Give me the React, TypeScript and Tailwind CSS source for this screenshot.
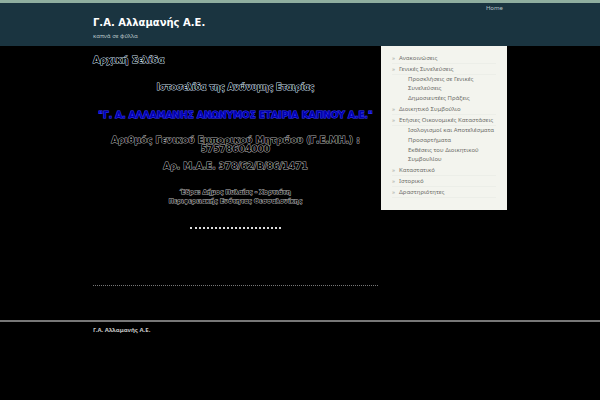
const sections = [
  { label: 'Ανακοινώσεις', items: [] },
  {
    label: 'Γενικές Συνελεύσεις',
    items: ['Προσκλήσεις σε Γενικές Συνελεύσεις', 'Δημοσιευτέες Πράξεις'],
  },
  { label: 'Διοικητικό Συμβούλιο', items: [] },
  {
    label: 'Ετήσιες Οικονομικές Καταστάσεις',
    items: ['Ισολογισμοί και Αποτελέσματα', 'Προσαρτήματα', 'Εκθέσεις του Διοικητικού Συμβουλίου'],
  },
  { label: 'Καταστατικό', items: [] },
  { label: 'Ιστορικό', items: [] },
  { label: 'Δραστηριότητες', items: [] },
];

// black letters, only their edges are lit
const outlined = '[paint-order:stroke] text-black';

const Header = () => (
  <header className="h-[46px] border-t-[3px] border-[#8fae9f] bg-[#1a3440]">
    <div className="mx-auto flex w-[69%] items-start justify-between">
      <div className="pt-3">
        <h1 className="font-['DejaVu_Sans',sans-serif] text-[10px] leading-4 font-bold text-white">Γ.Α. Αλλαμανής Α.Ε.</h1>
        <p className="text-[6px] leading-[10px] text-[#b5c2c6]">καπνά σε φύλλα</p>
      </div>
      <nav className="pr-1">
        <a href="#" className="block text-[6px] leading-[10px] text-[#b5c2c6]">Home</a>
      </nav>
    </div>
  </header>
);

const Sidebar = () => (
  <aside className="w-[126px] shrink-0 bg-[#f3f4ee] px-[11px] pt-[7px] pb-3 text-[6px] text-[#6f6f6b]">
    <ul>
      {sections.map((s) => (
        <li key={s.label}>
          <div className="flex border-b border-[#eceee8] leading-[10px]">
            <span className="w-[7px] shrink-0 text-[#a5a5a0]">»</span>
            <a href="#" className="whitespace-nowrap">{s.label}</a>
          </div>
          <ul className="pl-4 leading-[9px]">
            {s.items.map((item) => (
              <li key={item} className="pb-px"><a href="#">{item}</a></li>
            ))}
          </ul>
        </li>
      ))}
    </ul>
  </aside>
);

const Content = () => (
  <main className="min-w-0 flex-1 pt-2">
    <h2 className={`${outlined} text-[9px] leading-3 font-bold font-['DejaVu_Sans',sans-serif] [-webkit-text-stroke:1px_#c4dbe6]`}>Αρχική Σελίδα</h2>
    <div className="flex flex-col items-center pt-4 text-center font-bold">
      <h3 className={`${outlined} text-[8px] leading-3 font-['DejaVu_Sans',sans-serif] [-webkit-text-stroke:1px_#c4dbe6]`}>
        Ιστοσελίδα της Ανώνυμης Εταιρίας
      </h3>
      <h3 className="pt-4 font-['DejaVu_Sans',sans-serif] text-[9px] leading-[10px] whitespace-nowrap text-[#0000b0] [paint-order:stroke] [-webkit-text-stroke:1px_#3838ff]">
        "Γ. Α. ΑΛΛΑΜΑΝΗΣ ΑΝΩΝΥΜΟΣ ΕΤΑΙΡΙΑ ΚΑΠΝΟΥ Α.Ε."
      </h3>
      <p className={`${outlined} pt-4 text-[9px] leading-[9px] font-['DejaVu_Sans',sans-serif] [-webkit-text-stroke:1px_#aaaaaa]`}>
        Αριθμός Γενικού Εμπορικού Μητρώου (Γ.Ε.ΜΗ.) : 57578604000
      </p>
      <p className={`${outlined} pt-2 text-[9px] leading-[9px] font-['DejaVu_Sans',sans-serif] [-webkit-text-stroke:1px_#aaaaaa]`}>
        Αρ. Μ.Α.Ε. 378/62/Β/86/1471
      </p>
      <p className={`${outlined} pt-4 text-[6px] leading-[9px] font-['DejaVu_Sans',sans-serif] [-webkit-text-stroke:1px_#aaaaaa]`}>
        Έδρα: Δήμος Πυλαίας - Χορτιάτη
        <br />
        Περιφερειακής Ενότητας Θεσσαλονίκης
      </p>
      <div className="mt-[22px] w-[91px] border-t-2 border-dotted border-[#dddddd]" />
    </div>
    <div className="mt-14 border-t border-dotted border-[#777777]" />
  </main>
);

export default function App() {
  return (
    <div className="min-h-screen bg-black font-['Noto_Sans',sans-serif]">
      <Header />
      <div className="mx-auto flex w-[69%] gap-[3px] pb-[34px]">
        <Content />
        <div>
          <Sidebar />
        </div>
      </div>
      <footer className="border-t-2 border-[#777777]">
        <p className="mx-auto w-[69%] pt-1 text-[6px] leading-[8px] font-bold text-[#c4c4c4]">Γ.Α. Αλλαμανής Α.Ε.</p>
      </footer>
    </div>
  );
}
